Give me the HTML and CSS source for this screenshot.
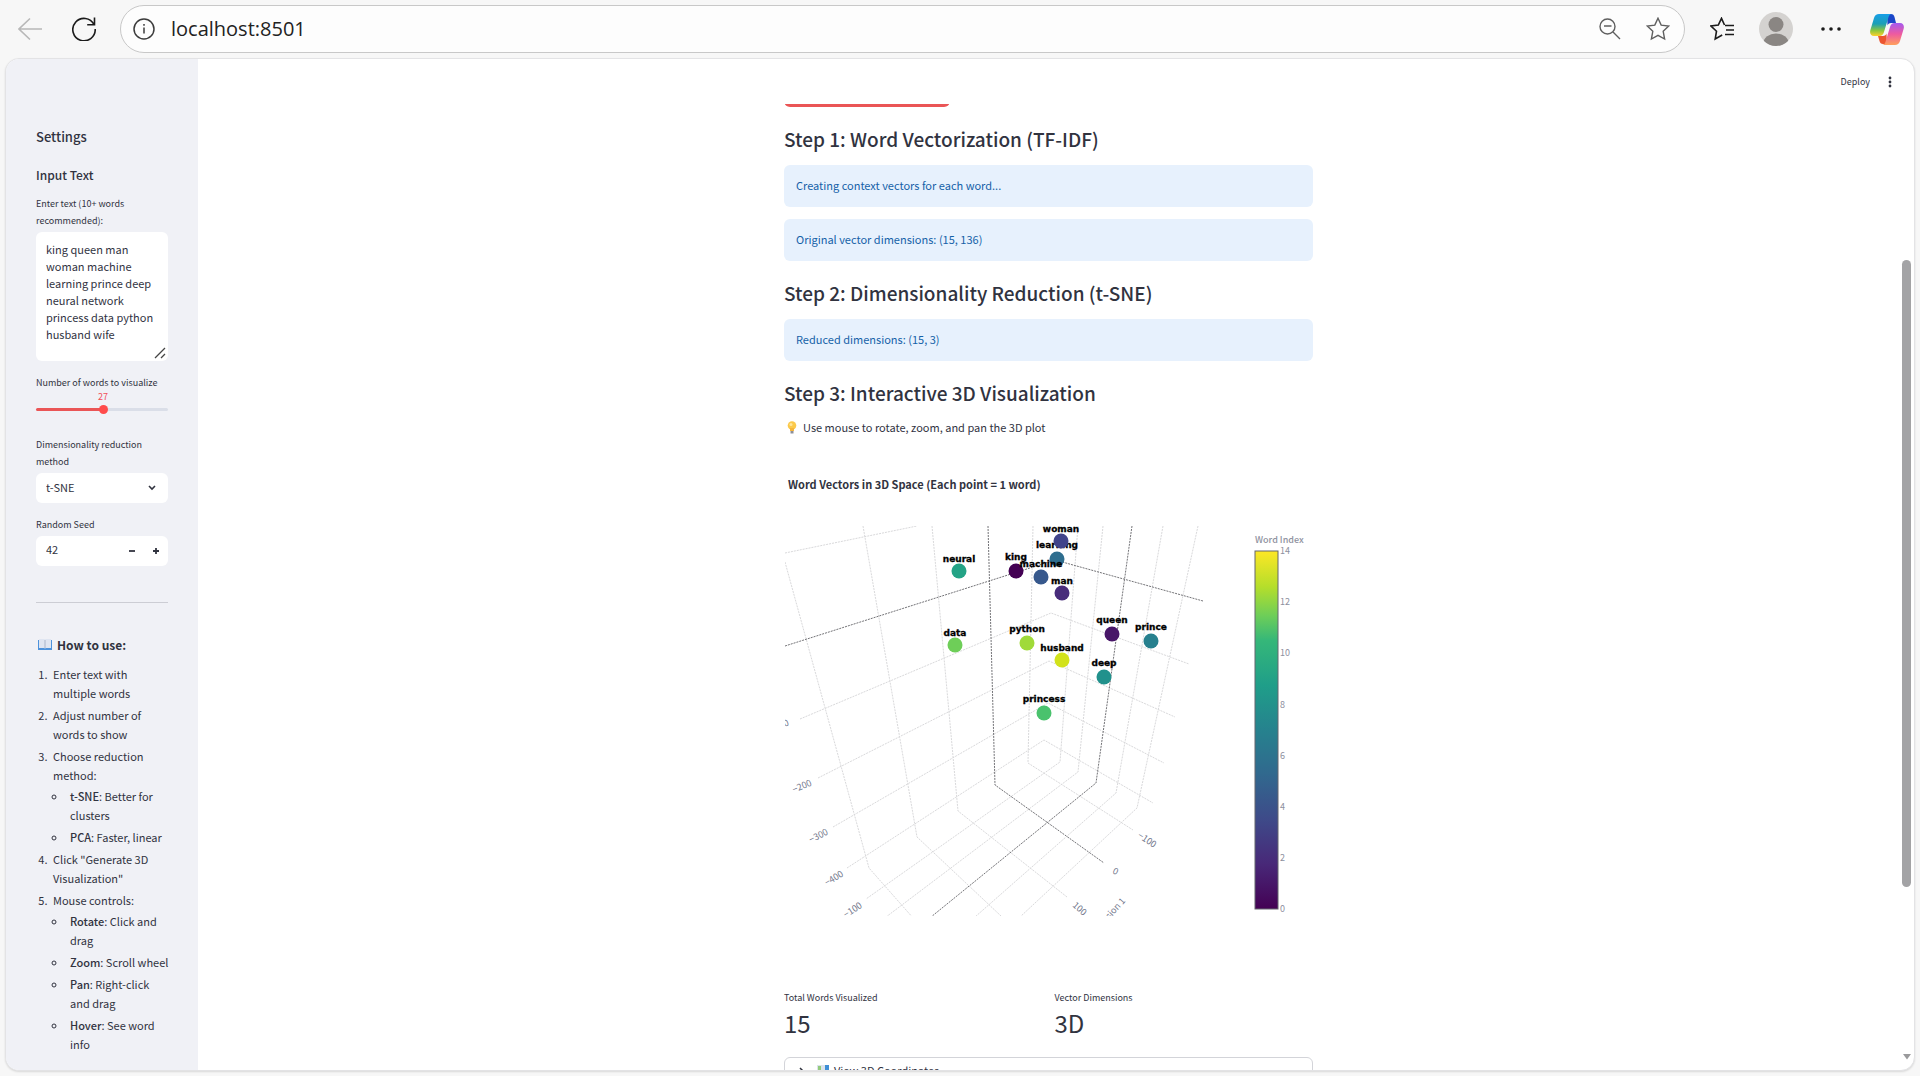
FILE: index.html
```html
<!DOCTYPE html>
<html lang="en">
<head>
<meta charset="utf-8">
<title>localhost:8501</title>
<link rel="stylesheet" href="styles.css">
</head>
<body>
<div class="browser">
  <header class="toolbar">
    <button class="tool back" aria-label="Back" disabled>
      <svg width="24" height="24" viewBox="0 0 24 24"><path d="M24 12H1M12 1.500L1 12l11 10.500"/></svg>
    </button>
    <button class="tool reload" aria-label="Reload">
      <svg width="24" height="24" viewBox="0 0 24 24"><path d="M22 7.500A11.200 11.200 0 1 0 23.200 12M22.500 0.500v7.300h-7.300"/></svg>
    </button>
    <form class="address">
      <svg class="thin" width="22" height="22" viewBox="0 0 22 22"><circle cx="11" cy="11" r="10"/><path d="M11 9.500v6M11 6v1.800"/></svg>
      <input class="url" type="text" value="localhost:8501" aria-label="Address">
      <button type="button" class="tool thin" aria-label="Zoom out">
        <svg width="22" height="22" viewBox="0 0 22 22"><circle cx="8.500" cy="8.500" r="7.500"/><path d="M14 14l7 7M5 8h7.500"/></svg>
      </button>
      <button type="button" class="tool thin" aria-label="Add to favorites">
        <svg width="24" height="24" viewBox="0 0 24 24"><path d="M12 1.200l3.200 6.900 7.500 1-5.500 5.200 1.400 7.700L12 18.300 5.400 22l1.400-7.700L1.300 9.100l7.500-1z"/></svg>
      </button>
    </form>
    <button class="tool favs" aria-label="Favorites">
      <svg width="24" height="24" viewBox="0 0 24 24"><path d="M14.500 8l-3-6.700L8.300 8l-7.300 1 5.500 5.200L5.200 22l7-4M15 8.500h9M16 13h8M15 17.500h9"/></svg>
    </button>
    <button class="tool avatar" aria-label="Profile">
      <svg width="34" height="34" viewBox="0 0 34 34"><clipPath id="av"><circle cx="17" cy="17" r="17"/></clipPath><g clip-path="url(#av)"><rect width="34" height="34" fill="#d4d2d0"/><circle cx="17" cy="12.500" r="7.500" fill="#8a8683"/><ellipse cx="17" cy="31" rx="12.500" ry="9.500" fill="#8a8683"/></g></svg>
    </button>
    <button class="tool more" aria-label="More">
      <svg width="20" height="20" viewBox="0 0 20 20"><circle cx="2" cy="10" r="1.800"/><circle cx="10" cy="10" r="1.800"/><circle cx="18" cy="10" r="1.800"/></svg>
    </button>
    <button class="tool copilot" aria-label="Copilot">
      <svg width="34" height="31" viewBox="0 0 34 31">
        <defs>
          <linearGradient id="c1" x1="0" y1="0" x2="0" y2="1"><stop offset="0" stop-color="#189fe8"/><stop offset=".45" stop-color="#1b9fb5"/><stop offset=".75" stop-color="#8cc63e"/><stop offset="1" stop-color="#ffd02b"/></linearGradient>
          <linearGradient id="c2" x1="0" y1="0" x2="0" y2="1"><stop offset="0" stop-color="#a45af0"/><stop offset=".5" stop-color="#ee5aa0"/><stop offset="1" stop-color="#ffa05c"/></linearGradient>
        </defs>
        <path d="M17 0h4c2 0 3 1.200 3.500 3l1.500 6h-5c-2 0-3 1-3.500 2.500z" fill="#1b46c8"/>
        <path d="M17 30h-4c-2 0-3-1.200-3.500-3L8 22h5c2 0 3-1 3.500-2.500z" fill="#ec5530"/>
        <path d="M9 0h13c-2 0-3 1.500-3.600 3.500L14 18c-.8 2.600-2.200 4-4.500 4H4c-3.500 0-4.500-3-3.600-6L4 4c.8-2.600 2.500-4 5-4z" fill="url(#c1)"/>
        <path d="M25 31H12c2 0 3-1.500 3.600-3.500L20 13c.8-2.600 2.200-4 4.500-4H30c3.500 0 4.500 3 3.600 6L30 27c-.8 2.600-2.500 4-5 4z" fill="url(#c2)"/>
      </svg>
    </button>
  </header>

  <div class="page">
    <aside class="sidebar">
      <h2 class="side-title">Settings</h2>
      <h3 class="side-subtitle">Input Text</h3>
      <div class="field">
        <label for="words">Enter text (10+ words recommended):</label>
        <div class="text-wrap">
          <textarea id="words" class="control">king queen man woman machine learning prince deep neural network princess data python husband wife</textarea>
          <svg class="grip" width="12" height="12" viewBox="0 0 12 12"><path d="M1 11L11 1M7 11l4-4"/></svg>
        </div>
      </div>
      <div class="field slider-field">
        <label for="count">Number of words to visualize</label>
        <output for="count">27</output>
        <input id="count" class="slider" type="range" min="3" max="50" value="27">
      </div>
      <div class="field">
        <label for="method">Dimensionality reduction method</label>
        <div class="select-wrap">
          <select id="method" class="control"><option>t-SNE</option><option>PCA</option></select>
          <svg class="chevron" width="8" height="6" viewBox="0 0 8 6"><path d="M1 1l3 3 3-3"/></svg>
        </div>
      </div>
      <div class="field seed-field">
        <label for="seed">Random Seed</label>
        <div class="number control">
          <input id="seed" type="text" inputmode="numeric" value="42">
          <button aria-label="Decrease"><svg width="6" height="6" viewBox="0 0 6 6"><path d="M0 3h6"/></svg></button>
          <button aria-label="Increase"><svg width="6" height="6" viewBox="0 0 6 6"><path d="M0 3h6M3 0v6"/></svg></button>
        </div>
      </div>
      <hr>
      <h3 class="side-subtitle howto">
        <svg width="14" height="12" viewBox="0 0 14 12"><path d="M0 1v10h14V1z" fill="#4d92dc"/><path d="M1 0h5.500l.5.800.5-.8H13v9H7.500L7 10l-.5-1H1z" fill="#dfe5f1"/><path d="M7 1v8" stroke="#a9b4c9"/></svg>
        How to use:
      </h3>
      <ol class="steps">
        <li>Enter text with multiple words</li>
        <li>Adjust number of words to show</li>
        <li>Choose reduction method:
          <ul><li><strong>t-SNE</strong>: Better for clusters</li><li><strong>PCA</strong>: Faster, linear</li></ul>
        </li>
        <li>Click "Generate 3D Visualization"</li>
        <li>Mouse controls:
          <ul><li><strong>Rotate</strong>: Click and drag</li><li><strong>Zoom</strong>: Scroll wheel</li><li><strong>Pan</strong>: Right-click and drag</li><li><strong>Hover</strong>: See word info</li></ul>
        </li>
      </ol>
    </aside>

    <main class="main">
      <div class="app-bar">
        <button class="deploy">Deploy</button>
        <button class="kebab" aria-label="Menu"><svg width="4" height="12" viewBox="0 0 4 12"><circle cx="2" cy="2" r="1.400"/><circle cx="2" cy="6" r="1.400"/><circle cx="2" cy="10" r="1.400"/></svg></button>
      </div>
      <div class="viewport">
        <div class="content">
          <button class="generate" aria-label="Generate 3D Visualization"></button>
          <h3 class="step">Step 1: Word Vectorization (TF-IDF)</h3>
          <p class="info">Creating context vectors for each word...</p>
          <p class="info">Original vector dimensions: (15, 136)</p>
          <h3 class="step">Step 2: Dimensionality Reduction (t-SNE)</h3>
          <p class="info">Reduced dimensions: (15, 3)</p>
          <h3 class="step">Step 3: Interactive 3D Visualization</h3>
          <p class="hint">
            <svg width="10" height="13" viewBox="0 0 10 13"><circle cx="5" cy="4.500" r="4.300" fill="#fbc94b"/><path d="M3 7h4v3H3z" fill="#f5b53d"/><path d="M3.500 10h3v2.500h-3z" fill="#8d8f98"/><circle cx="4" cy="3.500" r="1.500" fill="#ffe69a"/></svg>
            Use mouse to rotate, zoom, and pan the 3D plot
          </p>
          <svg class="plot" viewBox="784 450 529 525">
            <defs>
              <clipPath id="scene"><rect x="785" y="526" width="442" height="390"/></clipPath>
              <linearGradient id="viridis" x1="0" y1="1" x2="0" y2="0">
                <stop offset="0" stop-color="#440154"/><stop offset=".125" stop-color="#482878"/><stop offset=".25" stop-color="#3e4a89"/><stop offset=".375" stop-color="#31688e"/><stop offset=".5" stop-color="#26828e"/><stop offset=".625" stop-color="#1f9e89"/><stop offset=".75" stop-color="#35b779"/><stop offset=".82" stop-color="#6ece58"/><stop offset=".9" stop-color="#b5de2b"/><stop offset="1" stop-color="#fde725"/>
              </linearGradient>
            </defs>
            <text class="plot-title" x="788" y="489">Word Vectors in 3D Space (Each point = 1 word)</text>
            <g clip-path="url(#scene)">
              <g class="grid">
                <path d="M785 553L917 526M785 562L869 868L914 919M863 526L917 837L1001 916M932 526L958 811L1067 897M1033 526L1028 763L1133 830"/>
                <path d="M1078 526L1060 762L866 899M1103 526L1078 772L886 917M1163 526L1116 793L975 917M1198 526L1137 808L1020 917"/>
                <path d="M800 719L1051 613L1189 664M818 778L1049 661L1175 717M833 827L1048 703L1164 763M847 868L1044 740L1153 803"/>
              </g>
              <path class="zero" d="M988 526L995 785L1104 863M1132 526L1096 783L931 917M785 646L1055 560L1203 601"/>
              <g class="tick">
                <text transform="translate(785 727) rotate(-24)">0</text>
                <text transform="translate(794 793) rotate(-23)">−200</text>
                <text transform="translate(811 843) rotate(-27)">−300</text>
                <text transform="translate(827 886) rotate(-31)">−400</text>
                <text transform="translate(846 918) rotate(-33)">−100</text>
                <text transform="translate(1137 837) rotate(33)">−100</text>
                <text transform="translate(1112 873) rotate(25)">0</text>
                <text transform="translate(1072 906) rotate(42)">100</text>
                <text transform="translate(1091 940) rotate(-48)">Dimension 1</text>
              </g>
              <g class="words">
                <circle cx="1016" cy="571" r="7.500" fill="#440154"/><text x="1016" y="560">king</text>
                <circle cx="1112" cy="634" r="7.500" fill="#481668"/><text x="1112" y="623">queen</text>
                <circle cx="1062" cy="593" r="7.500" fill="#482c7b"/><text x="1062" y="584">man</text>
                <circle cx="1057" cy="559" r="7.500" fill="#2e6d8e"/><text x="1057" y="548">learning</text>
                <circle cx="1061" cy="541" r="7.500" fill="#40448a"/><text x="1061" y="532">woman</text>
                <circle cx="1041" cy="577" r="7.500" fill="#37588c"/><text x="1041" y="567">machine</text>
                <circle cx="1151" cy="641" r="7.500" fill="#27808e"/><text x="1151" y="630">prince</text>
                <circle cx="1104" cy="677" r="7.500" fill="#21918c"/><text x="1104" y="666">deep</text>
                <circle cx="959" cy="571" r="7.500" fill="#24a386"/><text x="959" y="562">neural</text>
                <circle cx="1044" cy="713" r="7.500" fill="#4ac26d"/><text x="1044" y="702">princess</text>
                <circle cx="955" cy="645" r="7.500" fill="#6ece58"/><text x="955" y="636">data</text>
                <circle cx="1027" cy="643" r="7.500" fill="#a0da39"/><text x="1027" y="632">python</text>
                <circle cx="1062" cy="660" r="7.500" fill="#d2e21b"/><text x="1062" y="651">husband</text>
              </g>
            </g>
            <rect x="1255" y="551" width="23" height="358" fill="url(#viridis)" stroke="#65666e"/>
            <text class="bar-title" x="1255" y="543">Word Index</text>
            <g class="bar-tick">
              <text x="1280" y="554">14</text><text x="1280" y="605">12</text><text x="1280" y="656">10</text><text x="1280" y="708">8</text><text x="1280" y="759">6</text><text x="1280" y="810">4</text><text x="1280" y="861">2</text><text x="1280" y="912">0</text>
            </g>
          </svg>
          <dl class="metrics">
            <div><dt>Total Words Visualized</dt><dd>15</dd></div>
            <div><dt>Vector Dimensions</dt><dd>3D</dd></div>
          </dl>
          <details class="expander">
            <summary>
              <svg width="6" height="10" viewBox="0 0 6 10"><path d="M1 2l3 3-3 3" fill="none" stroke="#31333f" stroke-width="1.500"/></svg>
              <svg width="12" height="12" viewBox="0 0 12 12"><path d="M0 0h12v12H0z" fill="#dce3ec"/><path d="M1 1h3v11H1z" fill="#93cb7c"/><path d="M8 0h4v12H8z" fill="#3f8fd6"/></svg>
              View 3D Coordinates
            </summary>
          </details>
        </div>
      </div>
    </main>
    <div class="scrollbar">
      <div class="thumb"></div>
      <svg class="arrow" width="10" height="8" viewBox="0 0 10 8"><path d="M1 1h8L5 6.500z"/></svg>
    </div>
  </div>
</div>
</body>
</html>
```

FILE: styles.css
```css
* { box-sizing: border-box; margin: 0; padding: 0; }
body {
  background: #f7f7f7;
  color: #31333f;
  font: 11px/19px "Noto Sans CJK SC", "Noto Sans", sans-serif;
}
button { border: 0; background: none; font: inherit; color: inherit; }
input, select, textarea { border: 0; outline: 0; font: inherit; color: inherit; background: none; }
svg { display: block; flex: none; }

.browser { display: flex; flex-direction: column; height: 100vh; overflow: hidden; }

/* Browser toolbar */
.toolbar { display: flex; align-items: center; height: 58px; flex: none; padding: 0 16px 0 18px; }
.tool svg { fill: none; stroke: #1b1b1b; stroke-width: 1.6; }
.back { margin-right: 30px; }
.back svg { stroke: #b8b8b8; }
.reload { margin-right: 24px; }
.address {
  flex: 1; display: flex; align-items: center; height: 48px; padding: 0 14px 0 12px;
  background: #fdfdfd; border: 1px solid #c8c8c8; border-radius: 24px;
}
svg.thin { fill: none; stroke: #3c3c3c; stroke-width: 1.5; }
.tool.thin svg { stroke: #5f5f5f; stroke-width: 1.4; }
.url { flex: 1; min-width: 0; padding-left: 16px; font: 20px/28px "Open Sans", sans-serif; color: #222; }
.address .tool + .tool { margin-left: 25px; }
.favs { margin: 0 25px; }
.avatar svg, .copilot svg { stroke: none; }
.more { margin: 0 29px 0 28px; }
.more svg { fill: #1b1b1b; stroke: none; }

/* Page frame */
.page {
  flex: 1; min-height: 0; display: flex; margin: 0 5px 5px; overflow: hidden;
  background: #fff; border: 1px solid #e3e3e5; border-radius: 14px; box-shadow: 0 1px 2px #0000001f;
}

/* Sidebar */
.sidebar { width: 192px; flex: none; padding: 68px 30px 0; background: #f0f1f6; overflow: hidden; }
.side-title { font-size: 13px; line-height: 20px; font-weight: 500; }
.side-subtitle { font-size: 12px; line-height: 18px; font-weight: 500; margin: 19px 0 11px; }
.field { font-size: 9px; line-height: 17px; margin-bottom: 13px; }
.field label { display: block; }
.control { display: block; width: 100%; background: #fff; border-radius: 6px; font-size: 11px; }
.text-wrap { position: relative; margin-top: 3px; }
textarea.control { height: 129px; padding: 9px 10px; line-height: 17px; resize: none; overflow: hidden; }
.grip { position: absolute; right: 2px; bottom: 2px; stroke: #444; stroke-width: 1.3; }
.slider-field { margin-bottom: 19px; }
.slider-field label { white-space: nowrap; }
.slider-field output { display: block; width: 100%; padding-left: 2px; text-align: center; line-height: 11px; color: #f0505a; }
.slider { display: block; appearance: none; width: 100%; height: 15px; }
.slider::-webkit-slider-runnable-track { height: 3px; border-radius: 2px; background: linear-gradient(90deg, #ea5556 51%, #dadee8 51%); }
.slider::-webkit-slider-thumb { appearance: none; width: 9px; height: 9px; margin-top: -3px; border-radius: 50%; background: #ff4b4b; }
.select-wrap { position: relative; margin-top: 3px; }
select.control { appearance: none; height: 30px; padding: 0 10px 2px; }
.chevron { position: absolute; right: 12px; top: 12px; fill: none; stroke: #31333f; stroke-width: 1.6; }
.number { display: flex; height: 30px; margin-top: 3px; }
.number input { flex: 1; min-width: 0; padding: 0 0 3px 10px; }
.number button { width: 24px; display: grid; place-items: center; }
.number svg { stroke: #31333f; stroke-width: 1.8; }
.sidebar hr { border: 0; border-top: 1px solid #cccdd4; margin: 36px 0 0; }
.howto { display: flex; align-items: center; gap: 5px; margin: 33px 0 11px; padding-left: 2px; font-weight: 700; }
.steps { margin-right: -2px; }
.steps li { margin: 0 0 3px 14px; padding-left: 3px; }
.steps ul { list-style: circle; margin: 2px 0 0; }
.steps strong { font-weight: 500; }

/* Main column */
.main { flex: 1; min-width: 0; display: flex; flex-direction: column; }
.app-bar { display: flex; align-items: center; justify-content: flex-end; gap: 18px; height: 45px; flex: none; padding-right: 7px; font-size: 9px; }
.kebab svg { fill: #31333f; }
.viewport { flex: 1; min-height: 0; overflow: hidden; }
.content { display: flex; flex-direction: column; gap: 12px; max-width: 529px; margin: 0 auto; }
.generate { width: 166px; height: 30px; margin-top: -27px; background: #ea5556; border-radius: 6px; }
.step { height: 34px; padding-top: 7px; font-size: 19px; line-height: 25px; font-weight: 500; }
.info { padding: 11px 12px 12px; background: #e7f1fd; border-radius: 6px; color: #1561a8; }
.hint { display: flex; align-items: center; gap: 6px; padding: 0 0 2px 3px; line-height: 17px; }
.plot { width: 100%; height: auto; aspect-ratio: 529 / 525; }
.plot text { fill: #31333f; }
.plot .plot-title { font-size: 11px; font-weight: 700; }
.grid, .zero { fill: none; stroke: #d9d9db; stroke-dasharray: 2 1; }
.zero { stroke: #737377; }
.plot .tick text { font-size: 9px; fill: #70758a; }
.plot .words text { font: 700 9px "DejaVu Sans", sans-serif; fill: #000; stroke: #000; stroke-width: .3; text-anchor: middle; }
.plot .bar-title { font-size: 9px; font-weight: 500; fill: #8f92a0; }
.plot .bar-tick text { font-size: 9px; fill: #8d909e; }
.metrics { display: grid; grid-template-columns: 1fr 1fr; gap: 12px; height: 58px; }
.metrics dt { padding-top: 1px; font-size: 9px; line-height: 20px; }
.metrics dd { font-size: 24px; line-height: 29px; }
.expander { border: 1px solid #d3d4d9; border-radius: 6px; height: 36px; }
.expander summary { display: flex; align-items: center; gap: 5px; padding: 3px 14px; list-style: none; }
.expander svg + svg { margin-left: 7px; }

/* Scrollbar */
.scrollbar { width: 15px; flex: none; display: grid; grid-template-rows: 201fr 626fr 166fr 17px; justify-items: center; }
.thumb { grid-row: 2; width: 9px; border-radius: 5px; background: #a3a3a5; }
.arrow { grid-row: 4; fill: #9a9a9c; }
```
